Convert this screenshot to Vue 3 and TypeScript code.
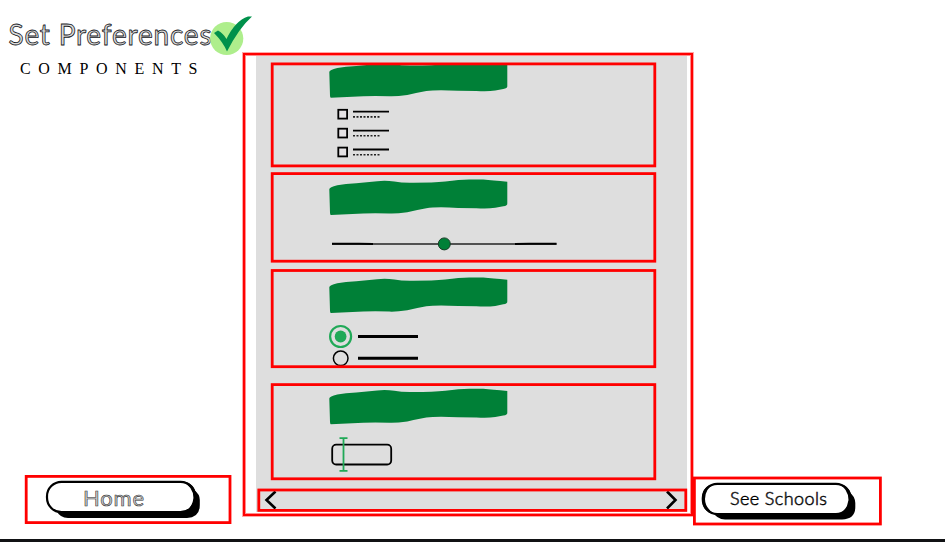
<script setup lang="ts">
const swash =
  'M0 10Q0 8 8 6Q16 4.500 27 4L48 2Q56 1 65 2.300Q73 3.800 84 3.500Q104 3.500 116 2.300Q130 .3 140 .3L154 .3Q163 1 178 2.500V24Q178.300 26.500 174 27L166 28.600Q158 29.800 147 29L129 28.700Q107 27.500 97 29Q86 31 78 33Q67 34.600 60 34.300Q45 33.800 34 34.300L1.500 35.700Q.7 35.500 .7 33Z'
const checks: number[] = [114, 132.9, 151.8]
</script>

<template>
  <div class="page">
    <div class="content">
      <aside class="side">
        <header>
          <svg class="art" width="243" height="80" viewBox="0 0 243 80">
            <text class="title" x="8.500" y="45.300" textLength="203">Set Preferences</text>
            <text class="subtitle" x="20" y="74" textLength="177.500">COMPONENTS</text>
            <circle cx="226.700" cy="38.500" r="16.600" fill="#aeee8c" />
            <path d="M214 33L218 30.500Q223 33 226.500 39Q235 21 248 16.500L252 16.500Q239 28 227 51.500Q223 42 214 33Z" fill="#00914b" />
          </svg>
        </header>
        <button class="home" type="button">
          <svg class="art" width="207" height="50" viewBox="24 475 207 50">
            <rect class="frame" x="26.200" y="476.400" width="203.800" height="46.200" />
            <path d="M56 510Q60 518 68 518H187Q199.800 517.500 199.800 505V500Q199.800 494 194 490L180 500V510Z" />
            <rect class="pill" x="47" y="481.800" width="148" height="30.400" rx="14.500" />
            <path d="M182 481Q196 483 196.200 497Q195.500 511 183 512.500Q192 509 193.500 498Q193.500 487 182 481Z" />
            <text class="label" x="83" y="506.300" font-size="22" textLength="61">Home</text>
          </svg>
        </button>
      </aside>

      <main class="panel">
        <section class="first">
          <svg class="art" width="385" height="105" viewBox="271 62 385 105">
            <clipPath id="band"><rect x="320" y="64" width="200" height="40" /></clipPath>
            <g clip-path="url(#band)">
              <path class="swash" transform="translate(329.300 62)" :d="swash" />
            </g>
            <g v-for="y in checks" :key="y">
              <rect x="338.300" :y="y - 4.200" width="8.800" height="8.800" class="check" />
              <path :d="`M353 ${y - 2.300}H389`" stroke="#000" stroke-width="1.800" />
              <path :d="`M353 ${y + 2.900}H379.500`" stroke="#222" stroke-width="1.600" stroke-dasharray="2 1.500" />
            </g>
            <rect class="frame" x="272.200" y="63.900" width="382.600" height="102" />
          </svg>
        </section>
        <section class="second">
          <svg class="art" width="385" height="91" viewBox="271 172 385 91">
            <path class="swash" transform="translate(329.300 179.200)" :d="swash" />
            <path d="M332 243.900H556.500" stroke="#222" stroke-width="1.500" />
            <path d="M332 243.700H359L373 244M515 244L529 243.700H556.500" stroke="#000" stroke-width="1.900" />
            <circle cx="444.300" cy="243.900" r="6" fill="#008037" stroke="#173d26" />
            <rect class="frame" x="272.200" y="173.600" width="382.600" height="87.600" />
          </svg>
        </section>
        <section class="third">
          <svg class="art" width="385" height="100" viewBox="271 269 385 100">
            <path class="swash" transform="translate(329.300 277.300)" :d="swash" />
            <circle cx="340.600" cy="336.500" r="10.500" fill="none" stroke="#20a957" stroke-width="2.200" />
            <circle cx="340.600" cy="336.500" r="5.900" fill="#20a957" />
            <circle cx="340.700" cy="358.300" r="7.300" fill="none" stroke="#000" stroke-width="1.500" />
            <path d="M358 336.600H418M358 358.300H418" stroke="#000" stroke-width="3" />
            <rect class="frame" x="272.200" y="270.500" width="382.600" height="96.200" />
          </svg>
        </section>
        <section class="fourth">
          <svg class="art" width="385" height="97" viewBox="271 383 385 97">
            <path class="swash" transform="translate(329.300 388.500)" :d="swash" />
            <rect x="332.200" y="444.700" width="59" height="19.800" rx="4" fill="none" stroke="#000" stroke-width="1.800" />
            <path d="M339.500 438.200H347.500M343.500 438.200V470.800M339.500 470.800H347.500" fill="none" stroke="#20a957" stroke-width="1.800" />
            <rect class="frame" x="272.200" y="384.600" width="382.600" height="94.200" />
          </svg>
        </section>
        <nav>
          <svg class="art" width="430" height="24" viewBox="257 488 430 24">
            <path d="M275.500 491.500L266.500 500L275.500 508.500M667 491.500L675.500 500L667 508.500" fill="none" stroke="#000" stroke-width="2.600" />
            <rect class="frame" x="258.800" y="490" width="427" height="20.400" />
          </svg>
        </nav>
      </main>

      <aside class="side right">
        <button class="schools" type="button">
          <svg class="art" width="189" height="50" viewBox="693 476 189 50">
            <rect class="frame" x="694.400" y="478" width="186" height="46" />
            <path d="M712 511Q717 519.500 725 519.500H842Q855.300 519 855.300 507V503Q855 496 849 492L835 500V511Z" />
            <rect class="pill" x="702.800" y="483.800" width="147.600" height="30.200" rx="14.500" />
            <path d="M838 483.500Q851.500 486 851.500 499Q851 512 838 514.500Q847 511 848.500 500Q848.500 489 838 483.500Z" />
            <path d="M849 505L852 505V515H838Q846 513 849 505Z" />
            <path d="M714 484Q702 486 702 499Q702 512 715 514.500Q705 508 705 499Q705 489 714 484Z" />
            <text class="label dark" x="730" y="505.300" font-size="18" textLength="97">See Schools</text>
          </svg>
        </button>
      </aside>
    </div>
    <footer />
  </div>
</template>

<style>
body {
  margin: 0;
  background: #fff;
}
</style>

<style scoped>
.page {
  width: 945px;
  height: 542px;
  overflow: hidden;
  display: flex;
  flex-direction: column;
}
.content {
  height: 539px;
  display: grid;
  grid-template-columns: 243px 450px 252px;
}
.side {
  display: flex;
  flex-direction: column;
  justify-content: space-between;
}
.right {
  justify-content: flex-end;
}
.art {
  display: block;
  overflow: visible;
}
button {
  border: 0;
  padding: 0;
  background: none;
  align-self: flex-start;
}
.home {
  margin: 0 0 14px 24px;
}
.schools {
  margin-bottom: 13px;
}
.panel {
  box-sizing: border-box;
  height: 463px;
  margin-top: 53px;
  padding: 7px 4px 0 12px;
  border: 2px solid #f00;
  box-shadow: 0 0 0 1px rgba(255, 0, 0, .35), inset 0 0 0 1px rgba(255, 0, 0, .45);
  background: linear-gradient(#dedede, #dedede) 11px 1px / 431px 456px no-repeat;
}
section {
  margin-left: 14px;
}
.second {
  margin-top: 5px;
}
.third {
  margin-top: 6px;
}
.fourth {
  margin-top: 14px;
}
nav {
  margin-top: 8px;
}
.frame {
  fill: none;
  stroke: #f00;
  stroke-width: 2.8px;
}
.swash {
  fill: #008037;
}
.check {
  fill: #e4e2e4;
  stroke: #000;
  stroke-width: 1.8px;
}
.pill {
  fill: #fff;
  stroke: #000;
  stroke-width: 2.2px;
}
.title {
  font: 400 28px Lato, sans-serif;
  fill: #ddd;
  stroke: #16181c;
  stroke-width: .8px;
}
.subtitle {
  font: 16px "Liberation Serif", serif;
  fill: #000;
}
.label {
  font-family: Lato, sans-serif;
  font-weight: 400;
  fill: #ccc;
  stroke: #333;
  stroke-width: .6px;
}
.dark {
  font-weight: 300;
  fill: #999;
  stroke: #000;
}
footer {
  height: 3px;
  background: #111214;
}
</style>
